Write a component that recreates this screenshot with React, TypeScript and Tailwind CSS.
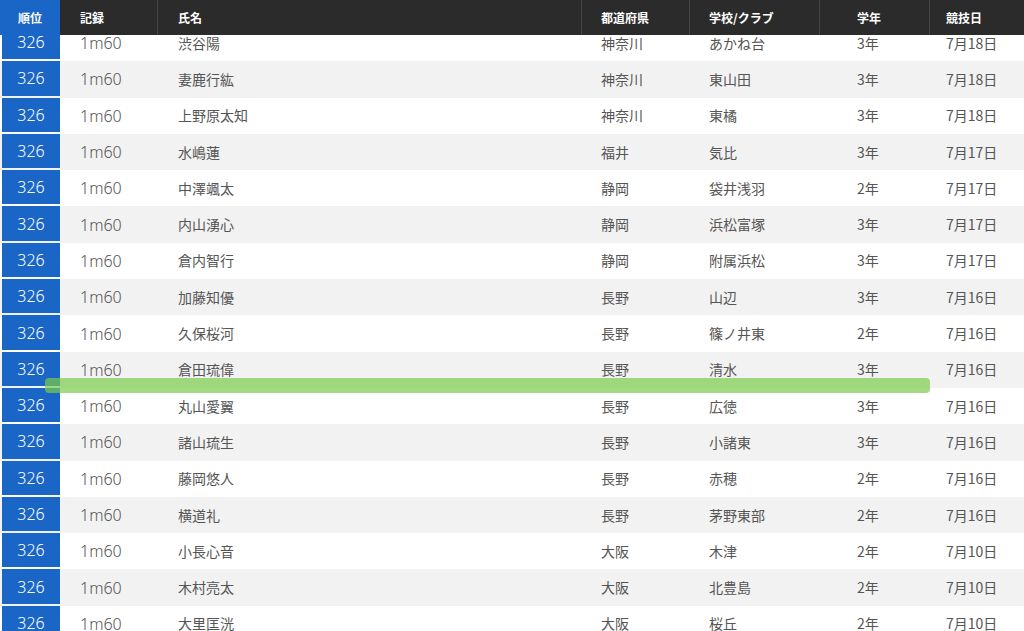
const rows = [
["渋谷陽","神奈川","あかね台","3年","7月18日"],
["妻鹿行紘","神奈川","東山田","3年","7月18日"],
["上野原太知","神奈川","東橘","3年","7月18日"],
["水嶋蓮","福井","気比","3年","7月17日"],
["中澤颯太","静岡","袋井浅羽","2年","7月17日"],
["内山湧心","静岡","浜松富塚","3年","7月17日"],
["倉内智行","静岡","附属浜松","3年","7月17日"],
["加藤知優","長野","山辺","3年","7月16日"],
["久保桜河","長野","篠ノ井東","2年","7月16日"],
["倉田琉偉","長野","清水","3年","7月16日"],
["丸山愛翼","長野","広徳","3年","7月16日"],
["諸山琉生","長野","小諸東","3年","7月16日"],
["藤岡悠人","長野","赤穂","2年","7月16日"],
["横道礼","長野","茅野東部","2年","7月16日"],
["小長心音","大阪","木津","2年","7月10日"],
["木村亮太","大阪","北豊島","2年","7月10日"],
["大里匡洸","大阪","桜丘","2年","7月10日"],
];
const font = { fontFamily: '"Noto Sans CJK JP","Noto Sans",sans-serif' };
const num = { fontFamily: '"Noto Sans","Liberation Sans",sans-serif' };
export default function App() {
  return (
    <div className="relative w-[1024px] h-[631px] overflow-hidden bg-white" style={font}>
      <div className="relative z-10 flex h-[35px] bg-[#2b2b2b] text-white text-[12px] font-bold items-center">
        <div className="w-[60px] h-full bg-[#1a66c6] flex items-center justify-center">順位</div>
        <div className="w-[98px] h-full pl-[20px] flex items-center border-r border-[#444]">記録</div>
        <div className="w-[424px] h-full pl-[20px] flex items-center border-r border-[#444]">氏名</div>
        <div className="w-[108px] h-full pl-[19px] flex items-center border-r border-[#444]">都道府県</div>
        <div className="w-[130px] h-full pl-[19px] flex items-center border-r border-[#444]">学校/クラブ</div>
        <div className="w-[110px] h-full pl-[37px] flex items-center border-r border-[#444]">学年</div>
        <div className="flex-1 h-full pl-[16px] flex items-center">競技日</div>
      </div>
      <div className="-mt-[10px]">
        {rows.map((r, i) => (
          <div key={i} className={`flex h-[36.3px] items-center text-[14px] text-[#555] ${i % 2 ? "bg-[#f2f2f2]" : "bg-white"}`}>
            <div className="w-[60px] h-full pl-[2px] pb-[2px]">
              <div className="h-full bg-[#1a66c6] text-white text-[16px] font-light flex items-center justify-center" style={num}>326</div>
            </div>
            <div className="w-[118px] pl-[20px] text-[16px] font-light" style={num}>1m60</div>
            <div className="w-[404px]">{r[0]}</div>
            <div className="w-[127px] pl-[19px]">{r[1]}</div>
            <div className="w-[148px]">{r[2]}</div>
            <div className="w-[89px]">{r[3]}</div>
            <div className="flex-1">{r[4]}</div>
          </div>
        ))}
      </div>
      <div className="absolute left-[45px] top-[378px] w-[885px] h-[15px] rounded-[4px] bg-[#7ccc4a]/70" />
    </div>
  );
}
